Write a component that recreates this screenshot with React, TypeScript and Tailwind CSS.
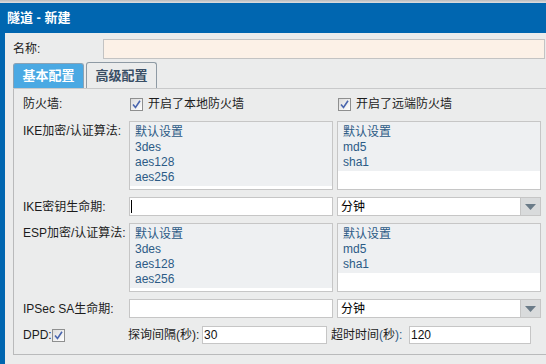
import React from 'react';

const FONT = '"Liberation Sans", "Noto Sans CJK SC", sans-serif';

function Check() {
  return (
    <span className="inline-flex h-[13px] w-[13px] shrink-0 items-center justify-center border border-[#8e8f8f] bg-gradient-to-br from-[#dcdcdc] to-[#ffffff]">
      <svg width="9" height="9" viewBox="0 0 9 9">
        <path d="M1 4.5 L3.5 7.5 L8 0.8" fill="none" stroke="#4a66ae" strokeWidth="1.6" />
      </svg>
    </span>
  );
}

function ListBox({ items }: { items: string[] }) {
  return (
    <div className="h-full w-[204px] border border-[#c6c6c6] bg-white">
      <div className="bg-[#eef0f2] pl-[5px] pt-[3px] pb-[1px] text-[#2c5b86]">
        {items.map((it) => (
          <div key={it} className="h-[15px] leading-[15px]">
            {it}
          </div>
        ))}
      </div>
    </div>
  );
}

function Input({ w, value, caret }: { w: string; value?: string; caret?: boolean }) {
  return (
    <div className={`flex h-full items-center border border-[#c6c6c6] bg-white pl-[1px] text-[#111] ${w}`}>
      {caret && <span className="h-[13px] w-px bg-black" />}
      {value}
    </div>
  );
}

function Select() {
  return (
    <div className="flex h-full w-[204px]">
      <div className="flex flex-1 items-center border border-[#c6c6c6] bg-white pl-[3px] text-black">分钟</div>
      <div className="flex w-[20px] items-center justify-center border border-l-0 border-[#c6c6c6] bg-[#d9dbdc]">
        <svg width="11" height="6" viewBox="0 0 11 6">
          <path d="M0 0 H11 L5.5 6 Z" fill="#6a7b88" />
        </svg>
      </div>
    </div>
  );
}

export default function App() {
  return (
    <div
      className="flex h-[364px] w-[546px] flex-col overflow-hidden bg-[#ebecec] text-[12px] text-[#1c1c1c]"
      style={{ fontFamily: FONT }}
    >
      <div className="h-[3px] bg-gradient-to-b from-[#b9bbbd] to-[#dfe0e1]" />
      <div className="flex h-[30px] items-center bg-[#0066b0] pl-[7px] text-[13px] font-bold text-white">
        隧道 - 新建
      </div>
      <div className="flex flex-1">
        <div className="w-[5px] bg-[#0066b0]" />
        <div className="flex flex-1 flex-col pl-[8px]">
          {/* name */}
          <div className="mt-[6px] flex h-[20px] items-center pr-px">
            <div className="w-[90px]">名称:</div>
            <div className="h-full flex-1 border border-[#c3c3c3] bg-[#fcf1e7]" />
          </div>

          {/* tabs */}
          <div className="mt-[4px] flex h-[26px] items-end border-b border-[#c8c9ca]">
            <div className="flex h-[25px] w-[71px] items-center justify-center rounded-t-[3px] border border-b-0 border-[#8aa2b5] bg-[#4aa9e3] text-[13px] font-bold text-white">
              基本配置
            </div>
            <div className="ml-[2px] flex h-[26px] w-[71px] items-center justify-center rounded-t-[3px] border border-b-0 border-[#8e9aa4] bg-[#ebecec] text-[13px] font-bold text-[#3a4f66]">
              高级配置
            </div>
          </div>

          {/* panel */}
          <div className="flex h-[266px] flex-col border-b border-l border-[#b9babb] pl-[9px] pt-[8px]">
            <div className="flex h-[14px] items-center">
              <div className="w-[107px]">防火墙:</div>
              <Check />
              <span className="ml-[5px] w-[190px]">开启了本地防火墙</span>
              <Check />
              <span className="ml-[5px]">开启了远端防火墙</span>
            </div>

            <div className="mt-[10px] flex h-[69px]">
              <div className="w-[106px] pt-[1px]">IKE加密/认证算法:</div>
              <ListBox items={['默认设置', '3des', 'aes128', 'aes256']} />
              <div className="w-[4px]" />
              <ListBox items={['默认设置', 'md5', 'sha1']} />
            </div>

            <div className="mt-[7px] flex h-[19px] items-center">
              <div className="w-[106px]">IKE密钥生命期:</div>
              <Input w="w-[204px]" caret />
              <div className="w-[4px]" />
              <Select />
            </div>

            <div className="mt-[7px] flex h-[69px]">
              <div className="w-[106px] pt-[1px]">ESP加密/认证算法:</div>
              <ListBox items={['默认设置', '3des', 'aes128', 'aes256']} />
              <div className="w-[4px]" />
              <ListBox items={['默认设置', 'md5', 'sha1']} />
            </div>

            <div className="mt-[7px] flex h-[19px] items-center">
              <div className="w-[106px]">IPSec SA生命期:</div>
              <Input w="w-[204px]" />
              <div className="w-[4px]" />
              <Select />
            </div>

            <div className="mt-[8px] flex h-[18px] items-center">
              <div className="w-[29px]">DPD:</div>
              <Check />
              <div className="w-[63px]" />
              <span className="w-[74px]">探询间隔(秒):</span>
              <Input w="w-[125px]" value="30" />
              <span className="ml-[4px] w-[78px]">
                超时时间<span className="text-[#2c5b86]">(</span>秒<span className="text-[#2c5b86]">):</span>
              </span>
              <Input w="w-[122px]" value="120" />
            </div>
          </div>
        </div>
      </div>
    </div>
  );
}
